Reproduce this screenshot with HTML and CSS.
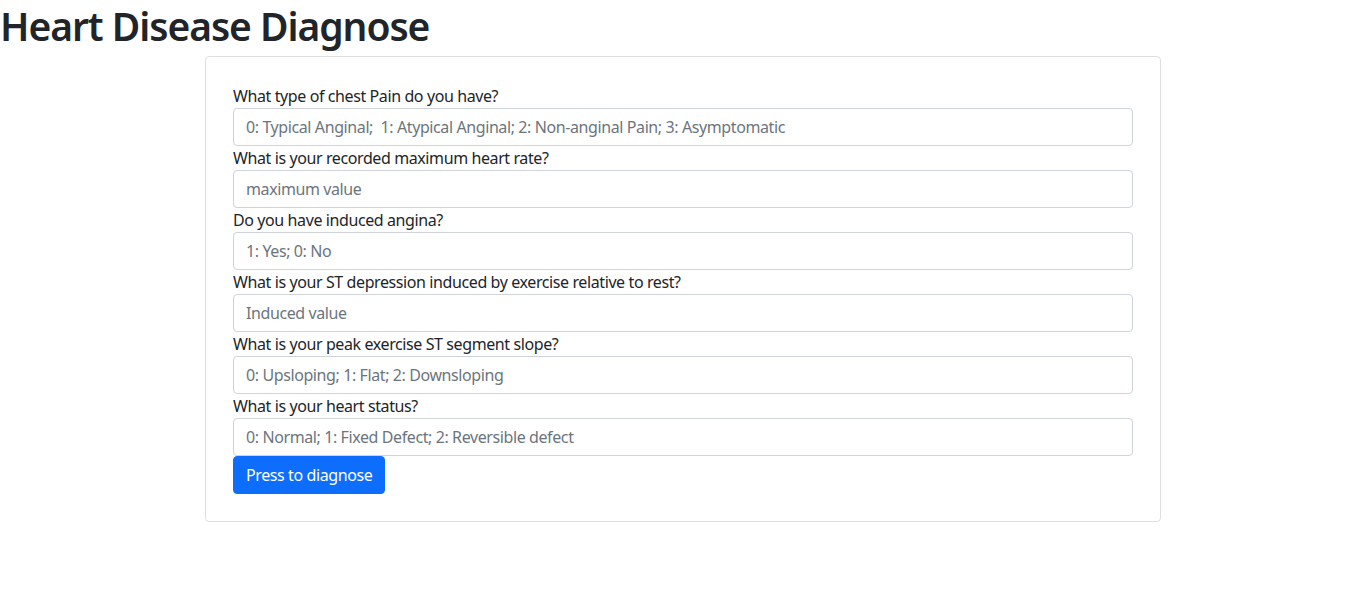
FILE: index.html
```html
<!DOCTYPE html>
<html lang="en">
<head>
<meta charset="utf-8">
<title>Heart Disease Diagnose</title>
<link rel="stylesheet" href="styles.css">
</head>
<body>
<h1 class="title">Heart Disease Diagnose</h1>
<div class="card">
  <form class="form">
    <label class="label" for="cp">What type of chest Pain do you have?</label>
    <input class="control" id="cp" type="text" placeholder="0: Typical Anginal;  1: Atypical Anginal; 2: Non-anginal Pain; 3: Asymptomatic">
    <label class="label" for="hr">What is your recorded maximum heart rate?</label>
    <input class="control" id="hr" type="text" placeholder="maximum value">
    <label class="label" for="an">Do you have induced angina?</label>
    <input class="control" id="an" type="text" placeholder="1: Yes; 0: No">
    <label class="label" for="st">What is your ST depression induced by exercise relative to rest?</label>
    <input class="control" id="st" type="text" placeholder="Induced value">
    <label class="label" for="sl">What is your peak exercise ST segment slope?</label>
    <input class="control" id="sl" type="text" placeholder="0: Upsloping; 1: Flat; 2: Downsloping">
    <label class="label" for="hs">What is your heart status?</label>
    <input class="control" id="hs" type="text" placeholder="0: Normal; 1: Fixed Defect; 2: Reversible defect">
    <div class="actions"><button class="btn" type="button">Press to diagnose</button></div>
  </form>
</div>
</body>
</html>
```
FILE: styles.css
```css
* { box-sizing: border-box; }
html, body { margin: 0; padding: 0; }
body {
  font-family: "Noto Sans", "Open Sans", sans-serif;
  font-size: 16px;
  line-height: 1.5;
  letter-spacing: -0.4px;
  color: #212529;
  background: #fff;
}
.title {
  margin: 0 0 8px 0;
  padding-top: 2px;
  height: 48px;
  font-size: 39px;
  font-weight: 600;
  line-height: 48px;
  letter-spacing: -1.05px;
  color: #212529;
}
.card {
  width: 956px;
  margin-left: 205px;
  border: 1px solid rgba(0,0,0,.125);
  border-radius: 4px;
  padding: 27px;
}
.form { display: flex; flex-direction: column; }
.label { display: block; line-height: 24px; }
.control {
  display: block;
  width: 100%;
  height: 38px;
  padding: 6px 12px;
  font: inherit;
  letter-spacing: inherit;
  color: #212529;
  border: 1px solid #ced4da;
  border-radius: 4px;
  background: #fff;
}
.control::placeholder { color: #6c757d; opacity: 1; }
.actions { display: flex; }
.btn {
  height: 38px;
  padding: 6px 12px;
  font: inherit;
  letter-spacing: inherit;
  white-space: nowrap;
  color: #fff;
  background: #0d6efd;
  border: 1px solid #0d6efd;
  border-radius: 4px;
}
```
